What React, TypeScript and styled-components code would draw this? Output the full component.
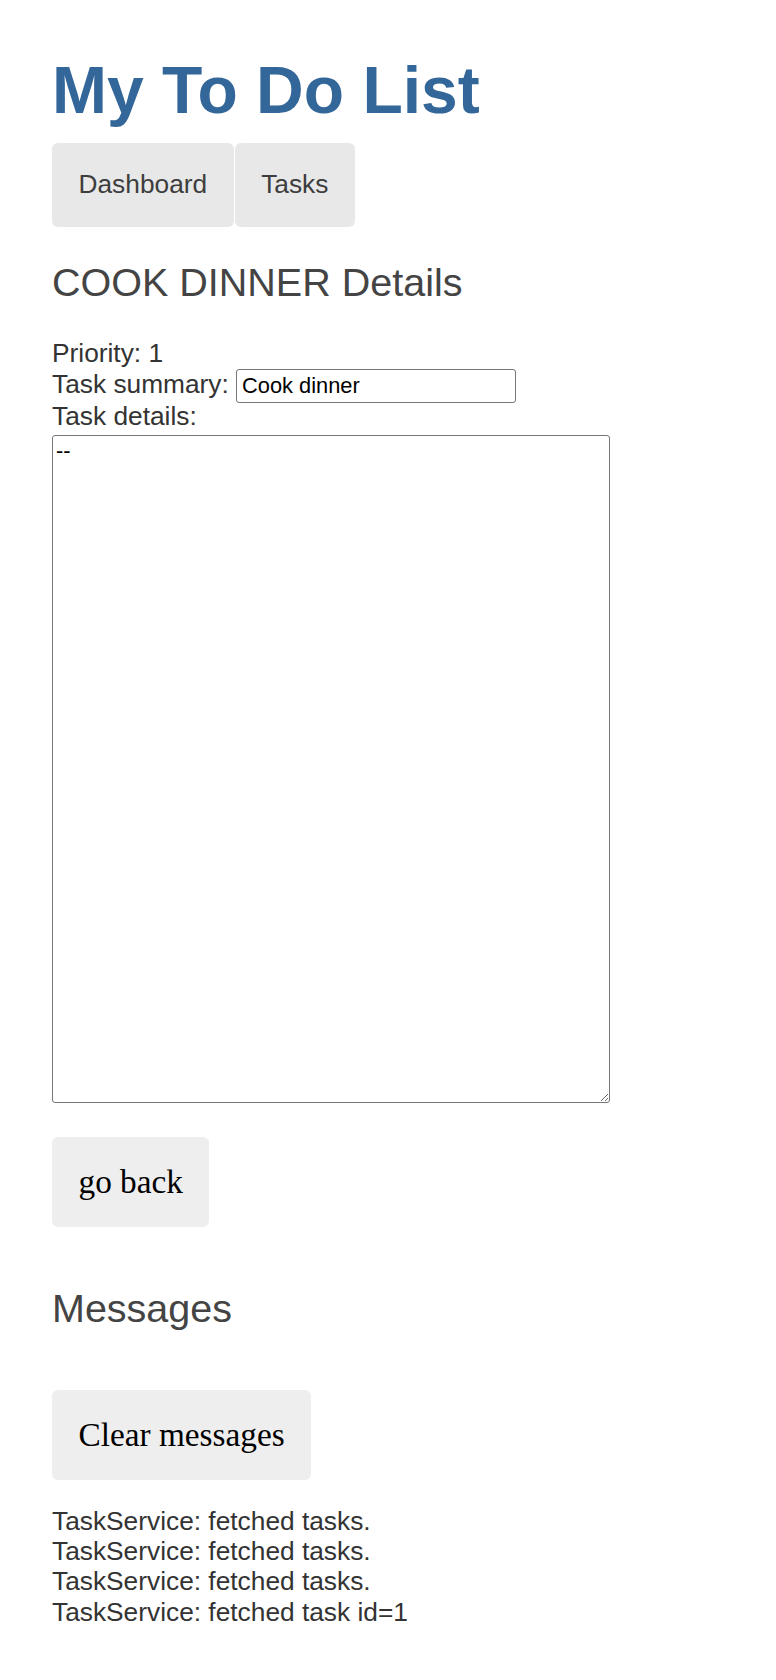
import React from 'react';
import styled, { createGlobalStyle } from 'styled-components';

const GlobalStyle = createGlobalStyle`
  html, body {
    margin: 0;
    padding: 0;
    background: #fff;
  }
  body {
    font-family: 'Liberation Sans', Arial, sans-serif;
    color: #333;
  }
`;

const Page = styled.div`
  padding: 52px;
  box-sizing: border-box;
  min-height: 1680px;
`;

const Title = styled.h1`
  margin: 1px 0 0;
  font-family: 'Liberation Sans', Arial, sans-serif;
  font-size: 66px;
  line-height: 75px;
  font-weight: bold;
  color: #369;
`;

const Nav = styled.nav`
  display: flex;
  gap: 1px;
  margin-top: 15.3px;
`;

const NavLink = styled.a`
  display: block;
  padding: 26px 26.5px;
  font-size: 26.3px;
  line-height: 31.5px;
  color: #3d3d3d;
  background-color: #e8e8e8;
  border-radius: 6px;
  text-decoration: none;
  cursor: pointer;
`;

interface HeadingProps {
  top: number;
  bottom?: number;
}

const Heading = styled.h2<HeadingProps>`
  margin: ${({ top }) => top}px 0 ${({ bottom }) => bottom || 0}px;
  font-family: 'Liberation Sans', Arial, sans-serif;
  font-size: 39.5px;
  line-height: 45px;
  font-weight: normal;
  color: #444;
`;

const Row = styled.div`
  font-size: 26.3px;
  line-height: 31.5px;
  height: 31.5px;
  color: #333;
  white-space: nowrap;
`;

const SummaryInput = styled.input`
  box-sizing: border-box;
  vertical-align: top;
  width: 279.5px;
  height: 34px;
  margin: 0;
  padding: 0 5px;
  border: 1px solid #767676;
  border-radius: 3px;
  font-family: 'Liberation Sans', Arial, sans-serif;
  font-size: 21.8px;
  color: #000;
  background: #fff;
  outline: none;
`;

const DetailsArea = styled.textarea`
  display: block;
  box-sizing: border-box;
  width: 558px;
  height: 668.3px;
  margin: 2.5px 0 0;
  padding: 3px;
  border: 1px solid #767676;
  border-radius: 3px;
  font-family: 'Liberation Sans', Arial, sans-serif;
  font-size: 21.8px;
  line-height: 24.9px;
  color: #000;
  background: #fff;
  outline: none;
`;

interface ButtonProps {
  top: number;
}

const Button = styled.button<ButtonProps>`
  display: block;
  margin: ${({ top }) => top}px 0 0;
  padding: 26px 26.5px;
  border: none;
  border-radius: 6px;
  background-color: #eee;
  color: #000;
  font-family: 'Liberation Serif', 'Times New Roman', serif;
  font-size: 33.3px;
  line-height: 38px;
  cursor: pointer;
`;

const MessageList = styled.div`
  margin-top: 25.8px;
`;

const MessageLine = styled.div`
  font-size: 26.3px;
  line-height: 30.3px;
  color: #333;
`;

const messages = [
  'TaskService: fetched tasks.',
  'TaskService: fetched tasks.',
  'TaskService: fetched tasks.',
  'TaskService: fetched task id=1',
];

const App = () => {
  return (
    <Page>
      <GlobalStyle />
      <Title>My To Do List</Title>
      <Nav>
        <NavLink>Dashboard</NavLink>
        <NavLink>Tasks</NavLink>
      </Nav>

      <Heading top={33} bottom={33.2}>
        COOK DINNER Details
      </Heading>
      <Row>Priority: 1</Row>
      <Row>
        Task summary: <SummaryInput defaultValue="Cook dinner" />
      </Row>
      <Row>Task details:</Row>
      <DetailsArea defaultValue="--" />
      <Button top={33.4}>go back</Button>

      <Heading top={59.4}>Messages</Heading>
      <Button top={58.9}>Clear messages</Button>
      <MessageList>
        {messages.map((message, i) => (
          <MessageLine key={i}>{message}</MessageLine>
        ))}
      </MessageList>
    </Page>
  );
};

export default App;
